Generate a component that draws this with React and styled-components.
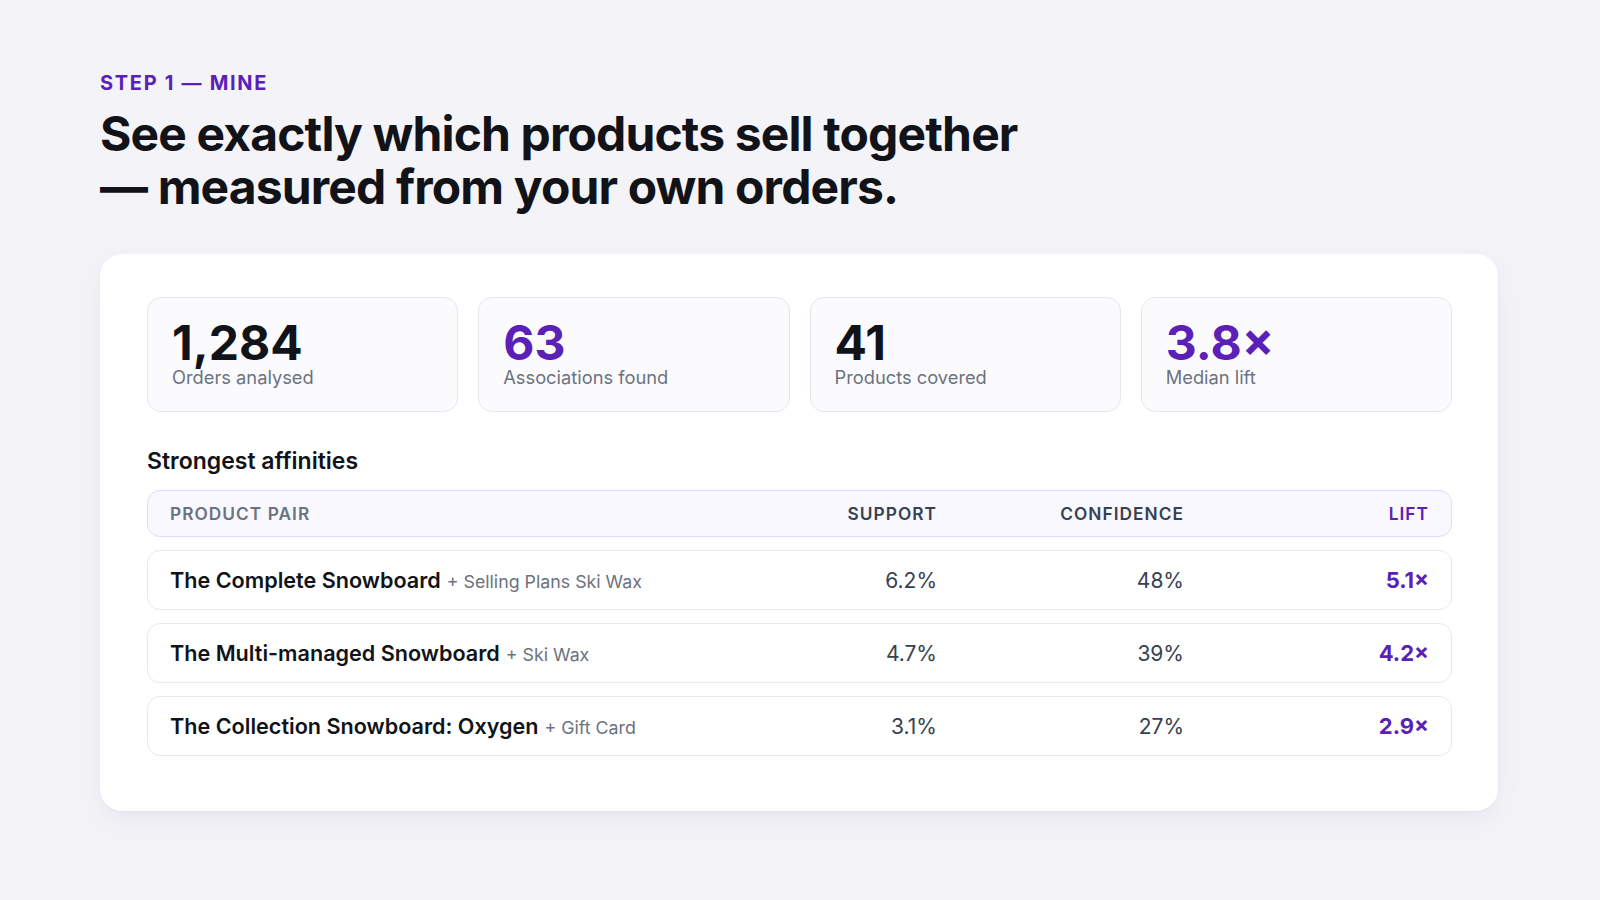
import React from "react";
import styled, { createGlobalStyle } from "styled-components";

const Global = createGlobalStyle`
  * { box-sizing: border-box; }
  html, body { margin: 0; padding: 0; }
  body {
    background: #f4f4f8;
    font-family: Inter, "Noto Sans", "Liberation Sans", sans-serif;
    color: #111318;
    -webkit-font-smoothing: antialiased;
  }
`;

const Page = styled.main`
  min-height: 900px;
  padding: 71px 100px 0 100px;
`;

const Eyebrow = styled.div`
  font-size: 20px;
  font-weight: 700;
  letter-spacing: 0.085em;
  color: #5b21b6;
  line-height: 24px;
`;

const Headline = styled.h1`
  margin: 12px 0 0 0;
  max-width: 960px;
  font-size: 48px;
  line-height: 53px;
  font-weight: 700;
  letter-spacing: -0.018em;
  color: #111318;
`;

const Card = styled.section`
  margin-top: 41px;
  width: 1398px;
  background: #ffffff;
  border-radius: 22px;
  padding: 43px 46px 55px 47px;
  box-shadow: 0 10px 30px rgba(30, 20, 80, 0.06), 0 1px 3px rgba(30, 20, 80, 0.04);
`;

const Stats = styled.div`
  display: grid;
  grid-template-columns: repeat(4, 1fr);
  gap: 20px;
`;

const StatBox = styled.div`
  background: #fbfbfe;
  border: 1px solid #e7e6ee;
  border-radius: 14px;
  padding: 22px 24px 0;
  height: 115px;
  display: flex;
  flex-direction: column;
`;

const StatValue = styled.div`
  font-size: 48px;
  line-height: 46px;
  font-weight: 700;
  color: ${(p) => (p.$accent ? "#5b21b6" : "#111318")};
`;

const StatLabel = styled.div`
  font-size: 18.3px;
  line-height: 22px;
  color: #6b7280;
`;

const SectionTitle = styled.h2`
  margin: 35px 0 15px 0;
  font-size: 23px;
  line-height: 28px;
  font-weight: 600;
  color: #111318;
`;

const Table = styled.div`
  display: flex;
  flex-direction: column;
  gap: 13px;
`;

const Grid = styled.div`
  display: grid;
  grid-template-columns: 1fr 200px 247px 245px;
  align-items: center;
  padding: 0 22px 0 22px;
  border-radius: 13px;
`;

const HeadRow = styled(Grid)`
  height: 47px;
  background: #f9f8ff;
  border: 1px solid #e0dbfa;
`;

const HeadCell = styled.div`
  font-size: 17.3px;
  font-weight: 600;
  letter-spacing: 0.06em;
  text-transform: uppercase;
  text-align: ${(p) => (p.$left ? "left" : "right")};
  color: ${(p) => (p.$accent ? "#5b21b6" : p.$left ? "#6b7280" : "#374151")};
`;

const Row = styled(Grid)`
  height: 60px;
  background: #ffffff;
  border: 1px solid #e9e9ef;
`;

const Pair = styled.div`
  font-size: 21.6px;
  white-space: nowrap;
`;

const Main = styled.span`
  font-weight: 560;
  color: #111318;
`;

const Partner = styled.span`
  font-size: 17.8px;
  color: #6b7280;
  margin-left: 6px;
`;

const Num = styled.div`
  font-size: ${(p) => (p.$accent ? "22px" : "21px")};
  text-align: right;
  color: ${(p) => (p.$accent ? "#5b21b6" : "#374151")};
  font-weight: ${(p) => (p.$accent ? 700 : 400)};
`;

const stats = [
  { value: "1,284", label: "Orders analysed" },
  { value: "63", label: "Associations found", accent: true },
  { value: "41", label: "Products covered" },
  { value: "3.8×", label: "Median lift", accent: true },
];

const rows = [
  { main: "The Complete Snowboard", partner: "Selling Plans Ski Wax", support: "6.2%", confidence: "48%", lift: "5.1×" },
  { main: "The Multi-managed Snowboard", partner: "Ski Wax", support: "4.7%", confidence: "39%", lift: "4.2×" },
  { main: "The Collection Snowboard: Oxygen", partner: "Gift Card", support: "3.1%", confidence: "27%", lift: "2.9×" },
];

export default function App() {
  return (
    <>
      <Global />
      <Page>
        <Eyebrow>STEP 1 — MINE</Eyebrow>
        <Headline>See exactly which products sell together — measured from your own orders.</Headline>
        <Card>
          <Stats>
            {stats.map((s) => (
              <StatBox key={s.label}>
                <StatValue $accent={s.accent}>{s.value}</StatValue>
                <StatLabel>{s.label}</StatLabel>
              </StatBox>
            ))}
          </Stats>
          <SectionTitle>Strongest affinities</SectionTitle>
          <Table>
            <HeadRow>
              <HeadCell $left>Product pair</HeadCell>
              <HeadCell>Support</HeadCell>
              <HeadCell>Confidence</HeadCell>
              <HeadCell $accent>Lift</HeadCell>
            </HeadRow>
            {rows.map((r) => (
              <Row key={r.main}>
                <Pair>
                  <Main>{r.main}</Main>
                  <Partner>+ {r.partner}</Partner>
                </Pair>
                <Num>{r.support}</Num>
                <Num>{r.confidence}</Num>
                <Num $accent>{r.lift}</Num>
              </Row>
            ))}
          </Table>
        </Card>
      </Page>
    </>
  );
}
